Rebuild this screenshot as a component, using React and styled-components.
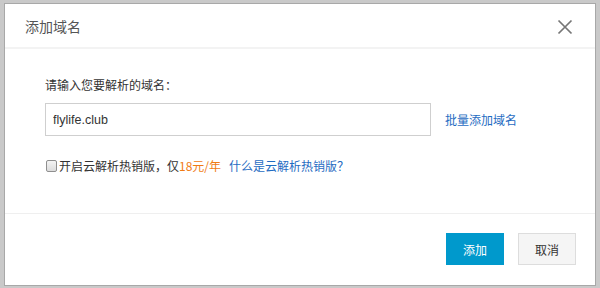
import styled, { createGlobalStyle } from "styled-components";

const GlobalStyle = createGlobalStyle`
  html, body {
    margin: 0;
    padding: 0;
    background: #c9c9c9;
    font-family: "Noto Sans CJK SC", "Noto Sans", sans-serif;
  }
`;

export default function App() {
  return (
    <>
      <GlobalStyle />
      <Backdrop>
        <Dialog>
          <Header>
            <Title>添加域名</Title>
            <CloseButton aria-label="close">
              <svg width="16" height="16" viewBox="0 0 16 16">
                <path
                  d="M1.5 1.5 L14.5 14.5 M14.5 1.5 L1.5 14.5"
                  stroke="#767676"
                  strokeWidth="1.7"
                  fill="none"
                />
              </svg>
            </CloseButton>
          </Header>
          <Body>
            <Label>请输入您要解析的域名：</Label>
            <InputRow>
              <DomainInput defaultValue="flylife.club" />
              <Link>批量添加域名</Link>
            </InputRow>
            <CheckRow>
              <Checkbox type="checkbox" />
              <span>开启云解析热销版，仅</span>
              <Price>18元/年</Price>
              <Link $gap>什么是云解析热销版？</Link>
            </CheckRow>
          </Body>
          <Footer>
            <Button $primary>添加</Button>
            <Button>取消</Button>
          </Footer>
        </Dialog>
      </Backdrop>
    </>
  );
}

const Backdrop = styled.div`
  width: 600px;
  height: 288px;
  box-sizing: border-box;
  padding: 3px 4px 2px 4px;
  background: #c9c9c9;
`;

const Dialog = styled.div`
  width: 592px;
  height: 283px;
  box-sizing: border-box;
  background: #fff;
  border: 1px solid #a8a8a8;
  display: flex;
  flex-direction: column;
`;

const Header = styled.div`
  height: 43px;
  flex-shrink: 0;
  display: flex;
  align-items: center;
  justify-content: space-between;
  padding: 0 22px 0 20px;
  border-bottom: 2px solid #f3f3f3;
`;

const Title = styled.div`
  font-size: 14px;
  color: #555;
  padding-top: 1px;
`;

const CloseButton = styled.div`
  display: flex;
  align-items: center;
  padding-top: 3px;
`;

const Body = styled.div`
  flex: 1;
  padding: 28px 40px 0 40px;
  border-bottom: 1px solid #efefef;
`;

const Label = styled.div`
  font-size: 12px;
  color: #333;
  line-height: 16px;
`;

const InputRow = styled.div`
  display: flex;
  align-items: center;
  margin-top: 10px;
`;

const DomainInput = styled.input`
  width: 386px;
  height: 33px;
  box-sizing: border-box;
  border: 1px solid #cfcfcf;
  padding: 0 7px;
  font-family: "Liberation Sans", sans-serif;
  font-size: 12.5px;
  color: #333;
  outline: none;
  margin-right: 14px;
`;

const Link = styled.span`
  font-size: 12px;
  color: #1f6cc2;
  margin-left: ${(p) => (p.$gap ? "8px" : "0")};
`;

const CheckRow = styled.div`
  display: flex;
  align-items: center;
  margin-top: 21px;
  font-size: 12px;
  color: #333;
`;

const Checkbox = styled.input`
  appearance: none;
  width: 11px;
  height: 12px;
  margin: 0 2px 0 1px;
  box-sizing: border-box;
  border: 1px solid #8f8f8f;
  border-radius: 2px;
  background: linear-gradient(#f4f4f4, #dcdcdc);
`;

const Price = styled.span`
  color: #f07b14;
`;

const Footer = styled.div`
  height: 71px;
  flex-shrink: 0;
  display: flex;
  justify-content: flex-end;
  align-items: flex-start;
  gap: 14px;
  padding: 19px 19px 0 0;
  box-sizing: border-box;
`;

const Button = styled.div`
  width: 58px;
  height: 32px;
  box-sizing: border-box;
  display: flex;
  align-items: center;
  justify-content: center;
  font-size: 12px;
  background: ${(p) => (p.$primary ? "#0099cc" : "#f5f5f5")};
  color: ${(p) => (p.$primary ? "#fff" : "#333")};
  border: 1px solid ${(p) => (p.$primary ? "#0099cc" : "#ddd")};
`;
